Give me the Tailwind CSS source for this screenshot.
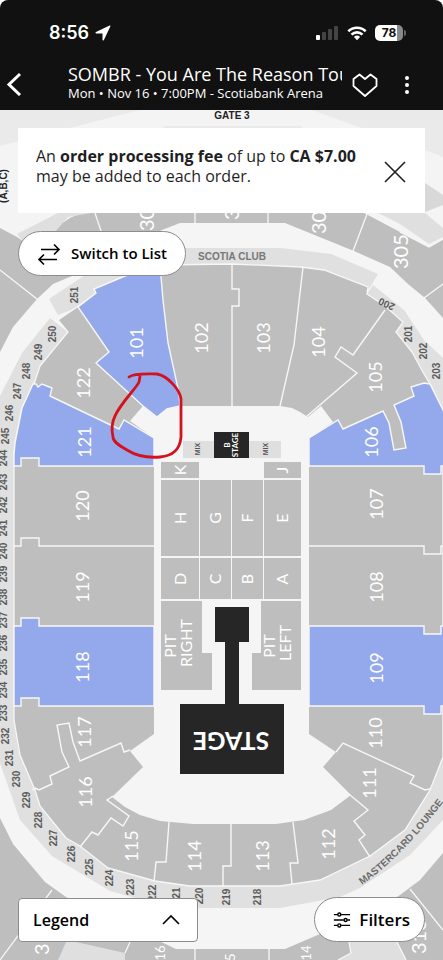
<!DOCTYPE html>
<html lang="en">
<head>
  <meta charset="UTF-8" />
  <meta name="viewport" content="width=device-width, initial-scale=1.0" />
  <title>SOMBR - You Are The Reason Tour</title>
  <script src="https://cdn.jsdelivr.net/npm/@tailwindcss/browser@4"></script>
</head>

<body class="bg-white font-['Open_Sans',sans-serif] text-[#1f1f1f]">
  <div class="flex h-screen flex-col overflow-hidden">

    <!-- Header -->
    <header class="shrink-0 rounded-t-lg bg-[#111] text-white">
      <!-- Status bar -->
      <div class="flex h-[62px] items-center justify-between pt-1 pr-[37px] pl-[49px]">
        <div class="flex items-center gap-1.5">
          <span class="font-['Inter',sans-serif] text-lg font-semibold">8:56</span>
          <svg class="h-4 w-4" viewBox="0 0 16 16" fill="currentColor" aria-hidden="true">
            <path d="M14.6.6 1 7.1c-.8.4-.5 1.300.300 1.300h6.200v6.300c0 .9 1 1.100 1.400.300L15.300 1.400c.3-.6-.2-1-.7-.8z" />
          </svg>
        </div>
        <div class="flex items-center gap-2">
          <svg class="h-4 w-[23px]" viewBox="0 0 23 16" aria-hidden="true">
            <rect x="0" y="10" width="4" height="5" rx="1" fill="#fff" />
            <rect x="6" y="7" width="4" height="8" rx="1" fill="#444" />
            <rect x="12" y="4" width="4" height="11" rx="1" fill="#444" />
            <rect x="18" y="1" width="4" height="14" rx="1" fill="#444" />
          </svg>
          <svg class="h-4 w-5" viewBox="0 0 20 16" fill="none" stroke="#fff" stroke-width="2.600" aria-hidden="true">
            <path d="M1.300 6.200a12.500 12.500 0 0 1 17.400 0" />
            <path d="M4.500 9.600a8 8 0 0 1 11 0" />
            <path d="M10 15.200 6.900 12a4.500 4.500 0 0 1 6.200 0z" fill="#fff" stroke="none" />
          </svg>
          <div class="flex items-center gap-px">
            <span class="h-4 w-7 rounded-[5px] bg-linear-to-r from-white from-78% to-[#8a8a8a] to-78% text-center font-['Inter',sans-serif] text-xs leading-4 font-bold text-[#111]">78</span>
            <span class="h-1.5 w-0.5 rounded-r bg-[#666]"></span>
          </div>
        </div>
      </div>

      <!-- Event bar -->
      <div class="flex h-12 items-start pr-6 pl-1.5">
        <button class="mt-2.5 mr-[46px] shrink-0" aria-label="Back">
          <svg class="h-6 w-4" viewBox="0 0 16 24" fill="none" stroke="currentColor" stroke-width="3"><path d="M14 2 3 12.500 14 23" /></svg>
        </button>
        <div class="min-w-0 flex-1 pt-px">
          <h1 class="overflow-hidden text-lg leading-[22px] whitespace-nowrap">SOMBR - You Are The Reason Tour</h1>
          <p class="text-[13px] leading-4 whitespace-nowrap">Mon • Nov 16 • 7:00PM - Scotiabank Arena</p>
        </div>
        <button class="mt-[11px] ml-2.5 shrink-0" aria-label="Favourite">
          <svg class="h-6 w-[26px]" viewBox="0 0 26 24" fill="none" stroke="currentColor" stroke-width="1.800" stroke-linejoin="round"><path d="M7.500 1.500 13 6l5.500-4.500L24.500 6v7L13 23 1.500 13V6z" /></svg>
        </button>
        <button class="mt-[11px] ml-[17px] shrink-0" aria-label="More options">
          <svg class="h-6 w-6" viewBox="0 0 24 24" fill="currentColor"><circle cx="12" cy="5" r="2" /><circle cx="12" cy="12" r="2" /><circle cx="12" cy="19" r="2" /></svg>
        </button>
      </div>
    </header>

    <main class="relative flex min-h-0 flex-1 flex-col justify-between">
      <!-- Seat map -->
      <svg class="absolute inset-0 h-full w-full" viewBox="0 110 443 850" preserveAspectRatio="xMidYMin slice" role="img" aria-label="Seat map">
        <!-- Gates and outer concourse -->
        <rect y="110" width="443" height="850" fill="#f4f4f4" />
        <g fill="#eaeaea">
          <path d="M0 110H140L0 146z" />
          <path d="M312 110H443V157L425 150 345 122z" />
          <path d="M165 126H300L320 140H145z" />
        </g>
        <path d="M425 183 443 195V205L425 212z" fill="#d8d8d8" />

        <!-- 300 level -->
        <path d="M0 228 17 237 40 253 55 228 70 218 100 205H350L366 214 400 232 429 247 443 239V960H0z" fill="#bebebe" />
        <g fill="#dfdfdf">
          <path d="M17 234 58 213 92 205 97 212 68 217 48 240 30 250z" />
          <path d="M378 213H425L443 228V237L429 244 400 224z" />
        </g>
        <!-- 300 level concourse -->
        <path d="M0 352 13 327 37 299 53 284 72 276 162 230 180 223H285L354 251 390 267 408 284 425 298 443 318V853L420 880 400 895 360 920 320 934 285 949H176L66 897 45 882 13 844 0 818z" fill="#f5f5f5" />
        <g fill="#dfdfdf">
          <path d="M67 940 58 960H125L125 953z" />
          <path d="M349 940 351 953 338 960H406L396 940z" />
        </g>
        <path d="M0 270 37 299M95 213 102 234M195 210V223M268 210V223M367 214 353 251M424 298 443 284M0 960 52 890M130 942 125 953M195 949V960M269 949V960M349 942 351 953 338 960M406 960 396 940M410 889 443 930M400 232 429 247 443 239" fill="none" stroke="#f7f7f7" stroke-width="1.300" />

        <!-- 200 level ring -->
        <g fill="#e0e0e0">
          <path d="M49 299 100 265 148 248H281L331 254 378 274 369 289 301 290 96 300 58 315z" />
          <path d="M367 294 373 285 404 310 424 340 443 358V420L430 384 412 360 396 334 403 322z" />
          <path d="M50 318 22 353 0 396V763L13 800 20 820 52 856 110 891 160 905 200 908H280L340 897 360 888 410 855 443 820V740L280 870 14 720V455L34 384 40 368 68 332z" />
        </g>

        <!-- 100 level bowl -->
        <path d="M14 455 15 443 22 408 34 384 40 366 68 332 58 320 77 307 96 293 94 289 125 276 160 265 232 264 301 267 324 270 368 287 367 294 385 306 403 322 396 332 412 352 424 374 430 384 443 412V757L430 790 405 830 370 856 320 880 280 886H190L155 881 108 868 80 846 66 838 40 806 35 790 20 755 14 720z" fill="#bebebe" stroke="#f7f7f7" stroke-width="1.300" />

        <!-- Available sections -->
        <g fill="#94a9ec" stroke="#f7f7f7" stroke-width="1.400">
          <path d="M78 307 96 293 94 289 125 276 160 265 163 300 168 343 179 393 180 406 167 409 157 417 143 406 96 363 109 352z" />
          <path d="M14 466V455L15 443 22 408 33 384 36 384 38 387 42 384 52 388 50 396 119 429 124 420 154 438V466H39V458H21V466z" />
          <path d="M309 438 338 420 343 429 383 411 389 423 394 450 406 448 401 422 394 405 414 396 411 387 424 383 430 384 444 412V466H441V474H424V466H309z" />
          <path d="M14 626H21V618H39V626H154V706H39V698H21V706H14z" />
          <path d="M309 626H424V634H441V626H444V706H441V714H424V706H309z" />
        </g>

        <!-- Section borders -->
        <g fill="none" stroke="#f7f7f7" stroke-width="1.400">
          <path d="M232 265V289H239V306H232V406" />
          <path d="M303 267 294 345 280 406" />
          <path d="M385 310 353 355 341 347 335 357 357 373 306 417" />
          <path d="M14 546H21V538H39V546H154M309 546H424V554H441V546H444" />
          <path d="M32 790 35 788 39 790 52 784 50 776 69 767 62 752 57 725 69 723 73 742 80 761 121 743 124 752 130 750" />
          <path d="M80 847 92 832 98 835 111 818 123 826 129 816 107 800 113 796" />
          <path d="M169 822 166 862H156L154 882" />
          <path d="M231 824V866H223V886" />
          <path d="M293 822 298 863H290L292 884" />
          <path d="M350 795 368 810 354 821 365 835 359 840 370 857" />
          <path d="M336 752 343 743 414 776 410 783 425 790 430 789" />
        </g>

        <!-- Floor -->
        <path d="M183 406H280L292 408 300 412 308 417 321 406 333 422 309 438V734L336 752 323 767 351 795 331 810 304 820 276 824H193L160 821 140 815 125 807 112 797 143 767 130 751 154 734V438L130 421 143 406 157 417 167 409z" fill="#f5f5f5" />
        <path d="M161 462H199V478H161zM264 462H301V478H264zM161 480H199V556H161zM200 480H231V556H200zM232 480H263V556H232zM264 480H301V556H264zM161 558H199V599H161zM200 558H231V599H200zM232 558H263V599H232zM264 558H301V599H264zM161 601H202V653H212V690H161zM261 601H301V690H252V653H261z" fill="#bebebe" />
        <path d="M183 441H214V458H183zM249 441H281V458H249z" fill="#dfdfdf" />
        <path d="M214 432H249V458H214zM215 607H249V642H239V704H284V774H180V704H225V642H215z" fill="#262626" />

        <!-- Section numbers -->
        <g class="font-['Lato',sans-serif]" fill="#fff" font-size="18" text-anchor="middle">
          <text transform="translate(143 343) rotate(-90)">101</text>
          <text transform="translate(208 338) rotate(-90)">102</text>
          <text transform="translate(270 338) rotate(-90)">103</text>
          <text transform="translate(325 342) rotate(-90)">104</text>
          <text transform="translate(382 377) rotate(-90)">105</text>
          <text transform="translate(378 442) rotate(-90)">106</text>
          <text transform="translate(383 504) rotate(-90)">107</text>
          <text transform="translate(383 587) rotate(-90)">108</text>
          <text transform="translate(383 668) rotate(-90)">109</text>
          <text transform="translate(382 733) rotate(-90)">110</text>
          <text transform="translate(376 783) rotate(-90)">111</text>
          <text transform="translate(335 844) rotate(-90)">112</text>
          <text transform="translate(269 856) rotate(-90)">113</text>
          <text transform="translate(201 856) rotate(-90)">114</text>
          <text transform="translate(138 846) rotate(-90)">115</text>
          <text transform="translate(92 792) rotate(-90)">116</text>
          <text transform="translate(91 732) rotate(-90)">117</text>
          <text transform="translate(89 667) rotate(-90)">118</text>
          <text transform="translate(89 587) rotate(-90)">119</text>
          <text transform="translate(89 506) rotate(-90)">120</text>
          <text transform="translate(91 442) rotate(-90)">121</text>
          <text transform="translate(90 383) rotate(-90)">122</text>
        </g>

        <!-- 300 level numbers -->
        <g class="font-['Lato',sans-serif]" fill="#fff" font-size="20">
          <text transform="translate(154 231) rotate(-90)">301</text>
          <text transform="translate(239 220) rotate(-90)">302</text>
          <text transform="translate(326 234) rotate(-90)">304</text>
          <text transform="translate(408 269) rotate(-90)">305</text>
          <text transform="translate(49 955) rotate(-90)">317</text>
          <text transform="translate(426 954) rotate(-90)">313</text>
        </g>
        <g class="font-['Lato',sans-serif]" fill="#fff" font-size="13">
          <text transform="translate(165 968) rotate(-90)">316</text>
          <text transform="translate(235 976) rotate(-90)">315</text>
          <text transform="translate(311 968) rotate(-90)">314</text>
        </g>

        <!-- Floor letters -->
        <g class="font-['Lato',sans-serif]" fill="#fff" font-size="16" text-anchor="middle">
          <text transform="translate(186 470) rotate(-90)">K</text>
          <text transform="translate(288 470) rotate(-90)">J</text>
          <text transform="translate(186 518) rotate(-90)">H</text>
          <text transform="translate(221 518) rotate(-90)">G</text>
          <text transform="translate(253 518) rotate(-90)">F</text>
          <text transform="translate(288 518) rotate(-90)">E</text>
          <text transform="translate(186 579) rotate(-90)">D</text>
          <text transform="translate(221 579) rotate(-90)">C</text>
          <text transform="translate(253 579) rotate(-90)">B</text>
          <text transform="translate(288 579) rotate(-90)">A</text>
          <text transform="translate(176 646) rotate(-90)">PIT</text>
          <text transform="translate(192 643) rotate(-90)">RIGHT</text>
          <text transform="translate(275 646) rotate(-90)">PIT</text>
          <text transform="translate(291 643) rotate(-90)">LEFT</text>
        </g>

        <!-- Stages -->
        <g class="font-['Lato',sans-serif]" fill="#fff" font-weight="700" text-anchor="middle">
          <text font-size="25" transform="translate(231 732) rotate(180)">STAGE</text>
          <text font-size="8" transform="translate(230 445) rotate(-90)">B</text>
          <text font-size="8" transform="translate(238 445) rotate(-90)">STAGE</text>
        </g>
        <g class="font-['Liberation_Sans',sans-serif]" fill="#555" font-size="7" font-weight="700" text-anchor="middle">
          <text transform="translate(200 449) rotate(-90)">MIX</text>
          <text transform="translate(268 449) rotate(-90)">MIX</text>
        </g>

        <!-- 200 level numbers -->
        <g class="font-['Liberation_Sans',sans-serif]" fill="#5c5c5c" font-size="10" font-weight="700" text-anchor="middle">
          <text transform="translate(388 301) rotate(205)">200</text>
          <text transform="translate(412 334) rotate(-90)">201</text>
          <text transform="translate(427 351) rotate(-90)">202</text>
          <text transform="translate(440 371) rotate(-90)">203</text>
          <text transform="translate(78 295) rotate(-90)">251</text>
          <text transform="translate(56 334) rotate(-90)">250</text>
          <text transform="translate(42 352) rotate(-90)">249</text>
          <text transform="translate(30 371) rotate(-90)">248</text>
          <text transform="translate(21 391) rotate(-90)">247</text>
          <text transform="translate(13 413) rotate(-90)">246</text>
          <text transform="translate(9 436) rotate(-90)">245</text>
          <text transform="translate(7 458) rotate(-90)">244</text>
          <text transform="translate(7 482) rotate(-90)">243</text>
          <text transform="translate(7 505) rotate(-90)">242</text>
          <text transform="translate(7 528) rotate(-90)">241</text>
          <text transform="translate(7 551) rotate(-90)">240</text>
          <text transform="translate(7 574) rotate(-90)">239</text>
          <text transform="translate(7 597) rotate(-90)">238</text>
          <text transform="translate(7 620) rotate(-90)">237</text>
          <text transform="translate(7 643) rotate(-90)">236</text>
          <text transform="translate(7 667) rotate(-90)">235</text>
          <text transform="translate(7 690) rotate(-90)">234</text>
          <text transform="translate(7 713) rotate(-90)">233</text>
          <text transform="translate(9 736) rotate(-90)">232</text>
          <text transform="translate(13 758) rotate(-90)">231</text>
          <text transform="translate(20 779) rotate(-90)">230</text>
          <text transform="translate(30 800) rotate(-90)">229</text>
          <text transform="translate(42 820) rotate(-90)">228</text>
          <text transform="translate(57 838) rotate(-90)">227</text>
          <text transform="translate(75 854) rotate(-90)">226</text>
          <text transform="translate(93 867) rotate(-90)">225</text>
          <text transform="translate(113 878) rotate(-90)">224</text>
          <text transform="translate(134 887) rotate(-90)">223</text>
          <text transform="translate(156 893) rotate(-90)">222</text>
          <text transform="translate(180 893) rotate(-90)">21</text>
          <text transform="translate(203 896) rotate(-90)">220</text>
          <text transform="translate(230 897) rotate(-90)">219</text>
          <text transform="translate(261 897) rotate(-90)">218</text>
        </g>

        <!-- Clubs and gates -->
        <path id="lounge" d="M362 885Q408 852 452 790" fill="none" />
        <g class="font-['Liberation_Sans',sans-serif]" font-weight="700" font-size="10">
          <text x="232" y="260" fill="#777" text-anchor="middle">SCOTIA CLUB</text>
          <text fill="#6c6c6c"><textPath href="#lounge">MASTERCARD LOUNGE</textPath></text>
          <text x="232" y="119" fill="#222" text-anchor="middle">GATE 3</text>
          <text transform="translate(7 186) rotate(-90)" fill="#222" text-anchor="middle">(A,B,C)</text>
        </g>

        <!-- Hand-drawn mark -->
        <path d="M129 377C134 373 148 374 157 374C168 376 180 390 181 399V437C180 449 173 456 160 457C148 458 138 457 127 450C120 446 113 442 113 437C111 428 112 422 115 416C120 404 138 386 139 382Q140 378 140 375" fill="none" stroke="#d3121f" stroke-width="2.800" stroke-linecap="round" />
      </svg>

      <div class="relative flex flex-col items-start gap-[18px] px-[18px] pt-[18px]">
        <!-- Fee notice -->
        <div class="flex w-full items-start justify-between bg-white px-[18px] pt-[18px] pb-[27px]">
          <p class="text-base leading-5">An <strong>order processing fee</strong> of up to <strong>CA $7.00</strong><br />may be added to each order.</p>
          <button class="mt-3.5 shrink-0" aria-label="Close">
            <svg class="h-6 w-6" viewBox="0 0 24 24" fill="none" stroke="currentColor" stroke-width="1.600"><path d="M2 2 22 22M22 2 2 22" /></svg>
          </button>
        </div>
        <button class="flex h-[45px] items-center gap-2.5 rounded-full border border-[#8c8c8c] bg-white px-[18px] text-[15px] font-semibold text-black">
          <svg class="h-6 w-6" viewBox="0 0 24 24" fill="none" stroke="currentColor" stroke-width="1.600"><path d="M4 7.500H22M17 2.500 22 7.500 17 12.500M20 17.500H2M7 12.500 2 17.500 7 22.500" /></svg>
          Switch to List
        </button>
      </div>

      <!-- Bottom controls -->
      <div class="relative flex items-center justify-between px-[18px] pb-[18px]">
        <button class="flex h-[44px] w-[180px] items-center justify-between rounded border border-[#8c8c8c] bg-white pr-4 pl-3.5 text-base font-semibold text-black">
          Legend
          <svg class="h-5 w-5" viewBox="0 0 20 20" fill="none" stroke="currentColor" stroke-width="1.600"><path d="M2 14 10 6 18 14" /></svg>
        </button>
        <button class="flex h-[45px] items-center gap-2 rounded-full border border-[#8c8c8c] bg-white pr-3.5 pl-[18px] text-[17px] font-semibold text-black">
          <svg class="h-[18px] w-[18px]" viewBox="0 0 20 20" fill="none" stroke="currentColor" stroke-width="1.600"><path d="M1 4H5M9 4H19M1 10H12M16 10H19M1 16H5M9 16H19" /><circle cx="7" cy="4" r="1.700" /><circle cx="14" cy="10" r="1.700" /><circle cx="7" cy="16" r="1.700" /></svg>
          Filters
        </button>
      </div>
    </main>
  </div>
</body>
</html>
